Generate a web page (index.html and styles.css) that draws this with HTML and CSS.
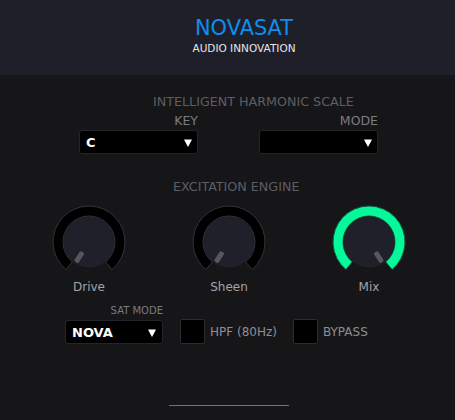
FILE: index.html
```html
<!DOCTYPE html>
<html>
<head>
<meta charset="utf-8">
<link rel="stylesheet" href="styles.css">
</head>
<body>
<header class="header">
  <div class="brand">NOVASAT</div>
  <div class="tagline">AUDIO INNOVATION</div>
</header>
<main class="main">
  <div class="section-title harmonic-title">INTELLIGENT HARMONIC SCALE</div>
  <div class="select-row">
    <div class="field">
      <div class="field-label">KEY</div>
      <div class="select key-select"><span class="select-value">C</span><svg class="arrow" width="8" height="8" viewBox="0 0 8 8"><path d="M0 0.5 H8 L4 8 Z" fill="#fff"/></svg></div>
    </div>
    <div class="field">
      <div class="field-label">MODE</div>
      <div class="select key-select"><span class="select-value"></span><svg class="arrow" width="8" height="8" viewBox="0 0 8 8"><path d="M0 0.5 H8 L4 8 Z" fill="#fff"/></svg></div>
    </div>
  </div>
  <div class="section-title engine-title">EXCITATION ENGINE</div>
  <div class="knob-row">
    <div class="knob">
      <svg width="76" height="76" viewBox="0 0 76 76">
        <path class="knob-track" d="M14.86 65.58 A36 36 0 1 1 61.14 65.58 L54.71 57.92 A26 26 0 1 0 21.29 57.92 Z"/>
        <circle class="knob-body" cx="38" cy="38" r="25.5"/>
        <rect class="knob-pointer" x="-2.5" y="12" width="5" height="12" rx="1.5" transform="translate(38 38) rotate(33)"/>
      </svg>
      <div class="knob-label">Drive</div>
    </div>
    <div class="knob">
      <svg width="76" height="76" viewBox="0 0 76 76">
        <path class="knob-track" d="M14.86 65.58 A36 36 0 1 1 61.14 65.58 L54.71 57.92 A26 26 0 1 0 21.29 57.92 Z"/>
        <circle class="knob-body" cx="38" cy="38" r="25.5"/>
        <rect class="knob-pointer" x="-2.5" y="12" width="5" height="12" rx="1.5" transform="translate(38 38) rotate(33)"/>
      </svg>
      <div class="knob-label">Sheen</div>
    </div>
    <div class="knob">
      <svg width="76" height="76" viewBox="0 0 76 76">
        <path class="knob-track active" d="M14.86 65.58 A36 36 0 1 1 61.14 65.58 L54.71 57.92 A26 26 0 1 0 21.29 57.92 Z"/>
        <circle class="knob-body" cx="38" cy="38" r="25.5"/>
        <rect class="knob-pointer" x="-2.5" y="12" width="5" height="12" rx="1.5" transform="translate(38 38) rotate(-33)"/>
      </svg>
      <div class="knob-label">Mix</div>
    </div>
  </div>
  <div class="bottom-row">
    <div class="sat-group">
      <div class="sat-label">SAT MODE</div>
      <div class="select sat-select"><span class="select-value">NOVA</span><svg class="arrow" width="8" height="8" viewBox="0 0 8 8"><path d="M0 0.5 H8 L4 8 Z" fill="#fff"/></svg></div>
    </div>
    <div class="toggle hpf"><span class="box"></span><span class="toggle-label">HPF (80Hz)</span></div>
    <div class="toggle bypass"><span class="box"></span><span class="toggle-label">BYPASS</span></div>
  </div>
  <div class="footer-line"></div>
</main>
</body>
</html>
```
FILE: styles.css
```css
* { box-sizing: border-box; }
html, body { margin: 0; padding: 0; }
body {
  width: 455px;
  height: 420px;
  background: #161619;
  font-family: "DejaVu Sans", Verdana, sans-serif;
  overflow: hidden;
}
.header {
  height: 75px;
  background: #1f1f29;
  padding-top: 16px;
  display: flex;
  flex-direction: column;
  align-items: center;
  padding-left: 33px;
}
.brand {
  font-size: 20.9px;
  line-height: 24px;
  color: #0d8ef0;
}
.tagline {
  margin-top: 2px;
  font-size: 10.5px;
  line-height: 13px;
  color: #e6e6ea;
}
.main {
  padding-top: 19px;
}
.section-title {
  font-size: 12.7px;
  line-height: 15px;
  color: #5d5d64;
  white-space: nowrap;
}
.harmonic-title { padding-left: 153px; }
.engine-title { padding-left: 173px; margin-top: 25px; }
.select-row {
  display: flex;
  gap: 61px;
  padding-left: 79px;
  margin-top: 4px;
}
.field { width: 119px; }
.field-label {
  text-align: right;
  font-size: 12.5px;
  line-height: 15px;
  color: #7c7c83;
  margin-bottom: 2px;
}
.select {
  height: 24px;
  background: #000;
  border: 1px solid #24242a;
  border-radius: 3px;
  display: flex;
  align-items: center;
  justify-content: space-between;
  padding: 0 5px 0 6px;
}
.select-value {
  color: #fff;
  font-weight: bold;
  font-size: 13px;
}
.arrow { display: block; margin-top: 1px; }
.knob-row {
  display: flex;
  padding-left: 19px;
  margin-top: 10px;
}
.knob {
  width: 140px;
  display: flex;
  flex-direction: column;
  align-items: center;
}
.knob svg { display: block; }
.knob-track {
  fill: #000;
  stroke: #333339;
  stroke-width: 1;
}
.knob-track.active { fill: #06f89b; stroke: #0a5a3c; }
.knob-body { fill: #20202a; }
.knob-pointer { fill: #56565c; }
.knob-label {
  font-size: 12px;
  line-height: 14px;
  color: #a3a3a9;
}
.bottom-row {
  display: flex;
  align-items: flex-end;
  padding-left: 65px;
  margin-top: 11px;
}
.sat-group {
  width: 98px;
  display: flex;
  flex-direction: column;
}
.sat-label {
  text-align: right;
  font-size: 10px;
  line-height: 12px;
  color: #7b7b82;
  margin-bottom: 3px;
}
.sat-select { padding-left: 6px; padding-right: 6px; }
.toggle {
  display: flex;
  align-items: center;
}
.hpf { margin-left: 17px; }
.bypass { margin-left: 16px; }
.box {
  width: 25px;
  height: 25px;
  background: #000;
  border: 1px solid #2b2b31;
  border-radius: 2px;
}
.toggle-label {
  margin-left: 5px;
  font-size: 12px;
  color: #8e8e94;
}
.footer-line {
  width: 120px;
  height: 1px;
  margin: 61px 0 0 169px;
  background: #2189e0;
}
```
